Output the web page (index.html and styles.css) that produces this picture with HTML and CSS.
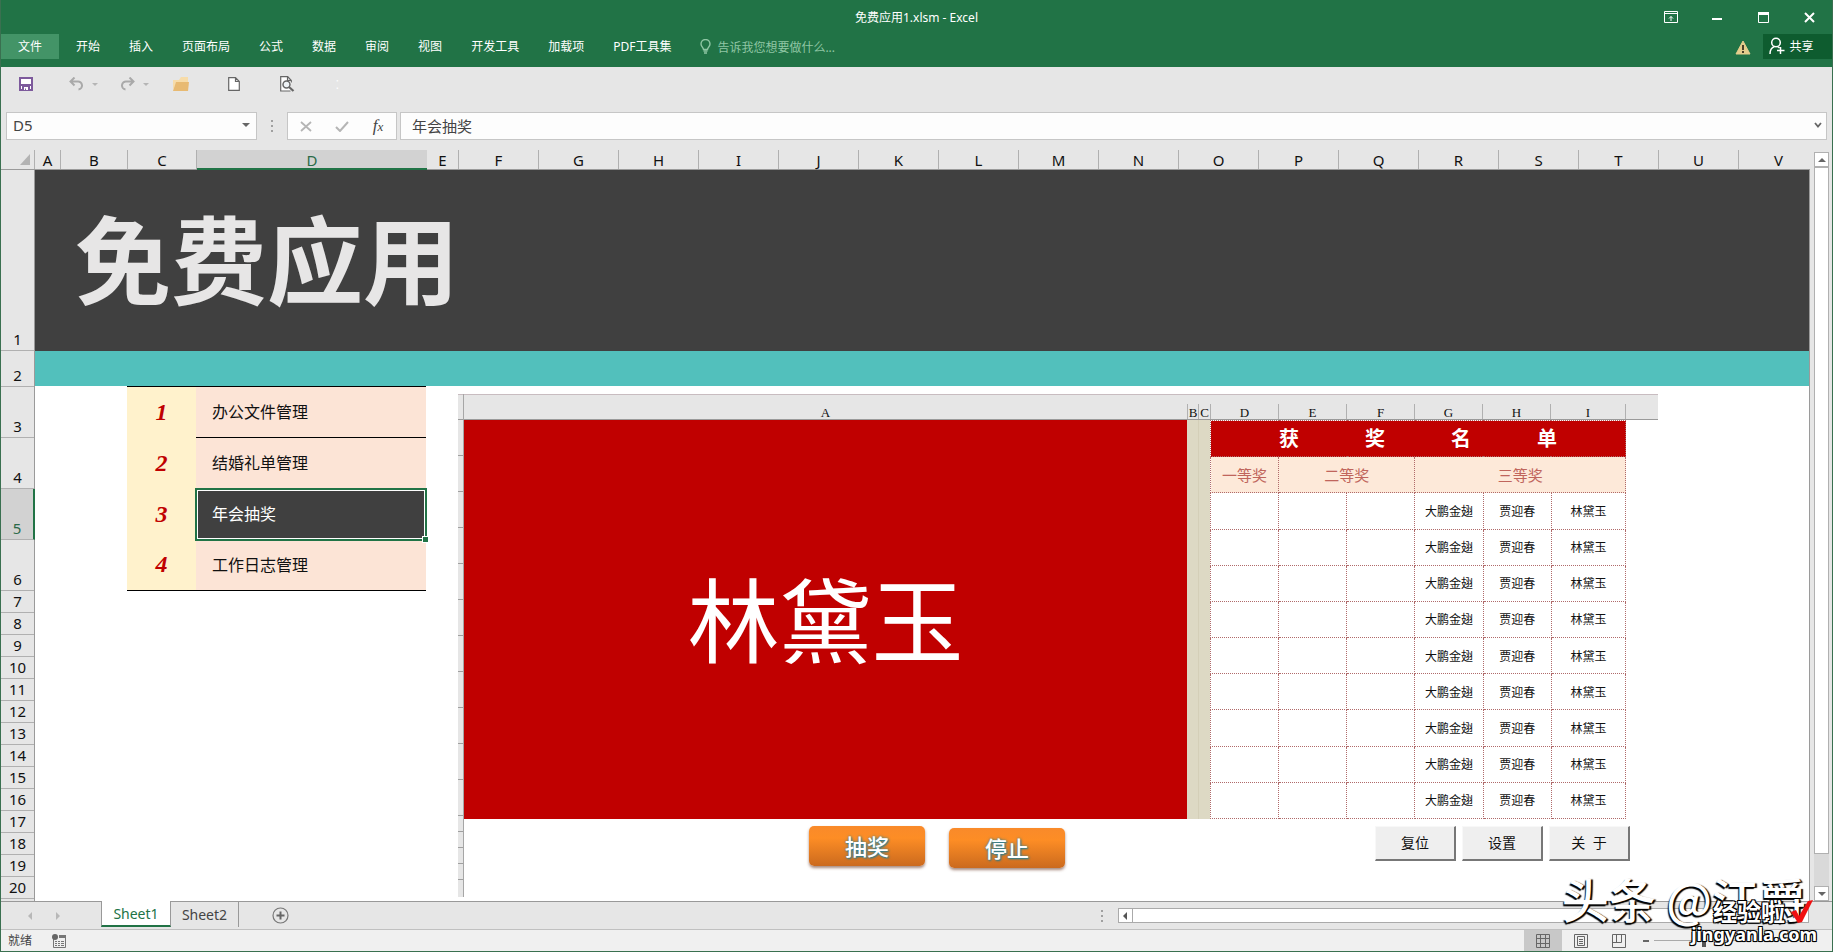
FILE: index.html
```html
<!DOCTYPE html>
<html lang="zh-CN">
<head>
<meta charset="utf-8">
<title>免费应用1.xlsm - Excel</title>
<link rel="stylesheet" href="styles.css">
</head>
<body>
<div class="app">
  <header class="ribbon">
    <div class="titlebar">
      <h1 class="doc-title">免费应用1.xlsm - Excel</h1>
      <div class="window-controls">
        <button aria-label="功能区显示选项"><svg width="14" height="12" viewBox="0 0 14 12"><path d="M.5 .5h13v11H.5zM.5 2.500h13M7 10V5.500M5 7.500l2-2 2 2" fill="none" stroke="#fff"/></svg></button>
        <button aria-label="最小化"><svg width="10" height="10" viewBox="0 0 10 10"><path d="M0 6h10v2H0z" fill="#fff"/></svg></button>
        <button aria-label="最大化"><svg width="11" height="11" viewBox="0 0 11 11"><path d="M.5 .5h10v10H.5z" fill="none" stroke="#fff"/><path d="M0 0h11v3H0z" fill="#fff"/></svg></button>
        <button aria-label="关闭"><svg width="11" height="11" viewBox="0 0 11 11"><path d="M1 1l9 9M10 1l-9 9" stroke="#fff" stroke-width="2"/></svg></button>
      </div>
    </div>
    <nav class="tabs">
      <button class="tab tab-file">文件</button>
      <button class="tab">开始</button>
      <button class="tab">插入</button>
      <button class="tab">页面布局</button>
      <button class="tab">公式</button>
      <button class="tab">数据</button>
      <button class="tab">审阅</button>
      <button class="tab">视图</button>
      <button class="tab">开发工具</button>
      <button class="tab">加载项</button>
      <button class="tab">PDF工具集</button>
      <button class="tell-me">
        <svg width="11" height="15" viewBox="0 0 11 15"><path d="M3.500 10.500c0-2-2.500-3-2.500-5.500a4.500 4.500 0 0 1 9 0c0 2.500-2.500 3.500-2.500 5.500z" fill="none" stroke="#8fc6a4" stroke-width="1.400"/><path d="M3.500 12h4M4 14h3" stroke="#8fc6a4" stroke-width="1.400"/></svg>
        告诉我您想要做什么...
      </button>
      <svg class="warning" width="16" height="15" viewBox="0 0 16 15"><path d="M8 1l7 13H1z" fill="#e5cd8c" stroke="#e5cd8c" stroke-linejoin="round"/><path d="M7 5h2v5H7zM7 11h2v2H7z" fill="#4a4028"/></svg>
      <button class="share">
        <svg width="16" height="18" viewBox="0 0 16 18"><circle cx="7" cy="5.500" r="4.300" fill="none" stroke="#fff" stroke-width="1.500"/><path d="M1 17c0-4 1.500-6.500 4.500-7.500M8.500 9.500l2 1.500M11.500 10v7M8 13.500h7.500" fill="none" stroke="#fff" stroke-width="1.500"/></svg>
        共享
      </button>
    </nav>
  </header>

  <div class="quick-access">
    <button class="qa qa-save" aria-label="保存"><svg width="14" height="14" viewBox="0 0 14 14"><path d="M1 1h12v12H1z" fill="#fff" stroke="#7d5a9c" stroke-width="2"/><path d="M1 7h12v2H1zM3 9h8v5H3z" fill="#7d5a9c"/><path d="M5 10h4v3H7v-1.500H6V13H5z" fill="#fff"/></svg></button>
    <button class="qa qa-undo" aria-label="撤消"><svg width="15" height="14" viewBox="0 0 15 14"><path d="M1.500 4.500h7a4 4 0 0 1 1 8M5.500 .5l-4 4 4 4" fill="none" stroke="#a9a9a9" stroke-width="2"/></svg><span class="caret"></span></button>
    <button class="qa qa-redo" aria-label="恢复"><svg width="15" height="14" viewBox="0 0 15 14"><path d="M13.500 4.500h-7a4 4 0 0 0-1 8M9.500 .5l4 4-4 4" fill="none" stroke="#a9a9a9" stroke-width="2"/></svg><span class="caret"></span></button>
    <button class="qa qa-open" aria-label="打开"><svg width="16" height="14" viewBox="0 0 16 14"><path d="M0 3h6l2-3h7v6H3L0 13z" fill="#f7dca9"/><path d="M3 5h13l-1 9H0z" fill="#e8ba72"/></svg></button>
    <button class="qa qa-new" aria-label="新建"><svg width="12" height="14" viewBox="0 0 12 14"><path d="M.7.700h6.800l3.800 3.800v8.800H.7zM7.500.700v3.800h3.800" fill="#fff" stroke="#666" stroke-width="1.200"/></svg></button>
    <button class="qa qa-preview" aria-label="打印预览"><svg width="15" height="16" viewBox="0 0 15 16"><path d="M10.500 15H.7V.700h7l3.600 3.800v2M7.500.700v3.800h3.800" fill="#fff" stroke="#666" stroke-width="1.200"/><circle cx="6.500" cy="8.500" r="3.500" fill="#eef3f6" stroke="#666" stroke-width="1.500"/><path d="M9 11l4.500 4" stroke="#666" stroke-width="2.200"/></svg></button>
    <span class="qa-more">⁚</span>
  </div>

  <div class="formula-bar">
    <div class="name-box">
      <input aria-label="名称框" value="D5">
      <span class="caret caret-dark"></span>
    </div>
    <span class="grip"><i></i><i></i><i></i></span>
    <div class="fx-buttons">
      <button aria-label="取消"><svg width="12" height="11" viewBox="0 0 12 11"><path d="M1 1l10 9M11 1L1 10" stroke="#b5b5b5" stroke-width="1.800"/></svg></button>
      <button aria-label="输入"><svg width="14" height="11" viewBox="0 0 14 11"><path d="M1 6l4 4 8-9" fill="none" stroke="#b5b5b5" stroke-width="2"/></svg></button>
      <button class="fx" aria-label="插入函数"><span>f<small>x</small></span></button>
    </div>
    <div class="formula">
      <input aria-label="编辑栏" value="年会抽奖">
      <svg width="8" height="6" viewBox="0 0 8 6"><path d="M1 1l3 3.500L7 1" fill="none" stroke="#666" stroke-width="1.800"/></svg>
    </div>
  </div>

  <main class="workbook">
    <div class="sheet">
      <div class="col-heads">
        <span class="corner"><svg width="10" height="11" viewBox="0 0 10 11"><path d="M10 0v11H0z" fill="#b3b3b3"/></svg></span>
        <span class="col col-a">A</span><span class="col col-b">B</span><span class="col col-c">C</span><span class="col col-d">D</span><span class="col col-e">E</span>
        <span class="col">F</span><span class="col">G</span><span class="col">H</span><span class="col">I</span><span class="col">J</span><span class="col">K</span><span class="col">L</span><span class="col">M</span><span class="col">N</span><span class="col">O</span><span class="col">P</span><span class="col">Q</span><span class="col">R</span><span class="col">S</span><span class="col">T</span><span class="col">U</span><span class="col">V</span>
      </div>
      <div class="sheet-body">
        <div class="row-heads">
          <span class="row row-1">1</span><span class="row row-2">2</span><span class="row row-tall">3</span><span class="row row-tall">4</span><span class="row row-tall row-active">5</span><span class="row row-tall">6</span>
          <span class="row">7</span><span class="row">8</span><span class="row">9</span><span class="row">10</span><span class="row">11</span><span class="row">12</span><span class="row">13</span><span class="row">14</span><span class="row">15</span><span class="row">16</span><span class="row">17</span><span class="row">18</span><span class="row">19</span><span class="row">20</span>
        </div>
        <div class="cells">
          <h2 class="banner">免费应用</h2>
          <div class="band"></div>
          <div class="content">
            <table class="menu">
              <tr><th>1</th><td>办公文件管理</td></tr>
              <tr><th>2</th><td>结婚礼单管理</td></tr>
              <tr class="selected"><th>3</th><td>年会抽奖<span class="fill-handle"></span></td></tr>
              <tr><th>4</th><td>工作日志管理</td></tr>
            </table>
            <section class="picture">
              <div class="pic-rows">
                <span class="pic-corner"></span>
                <i></i><i></i><i></i><i></i><i></i><i></i><i></i><i></i><i></i><i></i><i></i>
                <i class="low"></i><i class="low"></i><i class="low"></i><i class="low"></i><i class="low end"></i>
              </div>
              <div class="pic-main">
                <div class="pic-cols">
                  <span class="pc-a">A</span><span class="pc-b">B</span><span class="pc-c">C</span><span>D</span><span>E</span><span>F</span><span>G</span><span>H</span><span class="pc-i">I</span><span class="pc-rest"></span>
                </div>
                <div class="draw">
                  <div class="draw-name">林黛玉</div>
                  <div class="tan tan-b"></div><div class="tan tan-c"></div>
                  <table class="winners">
                    <colgroup><col><col><col><col><col><col class="wide"></colgroup>
                    <tr><th colspan="6" class="win-title"><div><span>获</span><span>奖</span><span>名</span><span>单</span></div></th></tr>
                    <tr class="ranks"><th>一等奖</th><th colspan="2">二等奖</th><th colspan="3">三等奖</th></tr>
                    <tr><td></td><td></td><td></td><td>大鹏金翅</td><td>贾迎春</td><td>林黛玉</td></tr>
                    <tr><td></td><td></td><td></td><td>大鹏金翅</td><td>贾迎春</td><td>林黛玉</td></tr>
                    <tr><td></td><td></td><td></td><td>大鹏金翅</td><td>贾迎春</td><td>林黛玉</td></tr>
                    <tr><td></td><td></td><td></td><td>大鹏金翅</td><td>贾迎春</td><td>林黛玉</td></tr>
                    <tr><td></td><td></td><td></td><td>大鹏金翅</td><td>贾迎春</td><td>林黛玉</td></tr>
                    <tr><td></td><td></td><td></td><td>大鹏金翅</td><td>贾迎春</td><td>林黛玉</td></tr>
                    <tr><td></td><td></td><td></td><td>大鹏金翅</td><td>贾迎春</td><td>林黛玉</td></tr>
                    <tr><td></td><td></td><td></td><td>大鹏金翅</td><td>贾迎春</td><td>林黛玉</td></tr>
                    <tr><td></td><td></td><td></td><td>大鹏金翅</td><td>贾迎春</td><td>林黛玉</td></tr>
                  </table>
                </div>
                <div class="actions">
                  <button class="orange">抽奖</button>
                  <button class="orange orange-stop">停止</button>
                  <div class="plain-buttons">
                    <button class="plain">复位</button><button class="plain">设置</button><button class="plain">关&nbsp; 于</button>
                  </div>
                </div>
              </div>
            </section>
          </div>
        </div>
      </div>
    </div>
    <div class="vscroll">
      <button aria-label="向上滚动"><span class="tri tri-up"></span></button>
      <div class="vthumb"></div>
      <button aria-label="向下滚动"><span class="tri tri-down"></span></button>
    </div>
  </main>

  <footer class="sheet-tabs">
    <button class="nav-arrow" aria-label="上一个"><span class="tri tri-left pale"></span></button>
    <button class="nav-arrow" aria-label="下一个"><span class="tri tri-right pale"></span></button>
    <button class="sheet-tab sheet-tab-active">Sheet1</button>
    <button class="sheet-tab">Sheet2</button>
    <button class="add-sheet" aria-label="新工作表"><svg width="17" height="17" viewBox="0 0 17 17"><circle cx="8.500" cy="8.500" r="7.500" fill="none" stroke="#777" stroke-width="1.200"/><path d="M8.500 4.500v8M4.500 8.500h8" stroke="#666" stroke-width="2"/></svg></button>
    <div class="hscroll">
      <span class="grip"><i></i><i></i><i></i></span>
      <button aria-label="向左滚动"><span class="tri tri-left"></span></button>
      <div class="hthumb"></div>
    </div>
  </footer>

  <div class="status">
    <span class="ready">就绪</span>
    <svg width="14" height="14" viewBox="0 0 14 14"><path d="M1.500 5v8.500h12v-12H7" fill="none" stroke="#777"/><path d="M7 1h7v3H7zM3 7h2v1H3zM6 7h2v1H6zM9 7h3v1H9zM3 9h2v1H3zM6 9h2v1H6zM9 9h3v1H9zM3 11h2v1H3zM6 11h2v1H6zM9 11h3v1H9z" fill="#777"/><circle cx="3" cy="3" r="3" fill="#666"/></svg>
    <div class="views">
      <button class="view view-active" aria-label="普通"><svg width="14" height="14" viewBox="0 0 14 14"><path d="M.5.500h13v13H.5zM.5 4.500h13M.5 9.500h13M4.500.500v13M9.500.500v13" fill="none" stroke="#666"/></svg></button>
      <button class="view" aria-label="页面布局"><svg width="14" height="14" viewBox="0 0 14 14"><path d="M.5.500h13v13H.5zM3.500 2.500h7v9h-7zM5 5.500h4M5 7.500h4M5 9.500h4" fill="none" stroke="#666"/></svg></button>
      <button class="view" aria-label="分页预览"><svg width="14" height="14" viewBox="0 0 14 14"><path d="M.5.500h13v13H.5zM4.500.500v8M9.500.500v8M.5 8.500h9" fill="none" stroke="#666"/></svg></button>
    </div>
    <span class="zoom-out"></span>
    <input class="zoom" type="range" aria-label="缩放" value="31">
  </div>

  <div class="mark mark-author">头条 @江爵</div>
  <div class="mark mark-site">
    <div class="mark-line">经验啦<svg width="22" height="24" viewBox="0 0 22 24"><path d="M0 12l5-2 3 6L17 1l5-1L11 22l-4 1z" fill="#f01010"/></svg></div>
    <div>jingyanla.com</div>
  </div>
</div>
</body>
</html>
```
FILE: styles.css
```css
* { box-sizing: border-box; }

body {
  margin: 0;
  font-family: "Noto Sans", "Noto Sans CJK SC", sans-serif;
  font-size: 12px;
  color: #222;
}

button {
  margin: 0;
  padding: 0;
  border: 0;
  background: none;
  font: inherit;
  color: inherit;
  display: flex;
  align-items: center;
  justify-content: center;
}

input {
  font: inherit;
  color: inherit;
  border: 0;
  outline: 0;
  background: none;
  min-width: 0;
  padding: 0;
}

svg { flex: none; }

.app {
  position: relative;
  height: 100vh;
  display: flex;
  flex-direction: column;
  background: #e6e6e6;
  border: 1px solid #3a7050;
  border-top: 0;
  overflow: hidden;
}

/* Ribbon */
.ribbon {
  flex: none;
  height: 67px;
  margin: 0 -1px;
  padding: 0 1px;
  background: #217346;
  color: #fff;
}
.titlebar {
  display: grid;
  grid-template-columns: 1fr auto 1fr;
  align-items: center;
  height: 34px;
}
.doc-title {
  grid-column: 2;
  margin: 0;
  font-size: 12px;
  font-weight: 400;
}
.window-controls {
  display: flex;
  justify-content: flex-end;
}
.window-controls button { width: 46px; height: 32px; }
.tabs {
  display: flex;
  height: 25px;
}
.tab { padding: 0 14px 2px; margin-right: 1px; }
.tab-file { padding: 0 17px 2px; margin-right: 3px; background: #439467; }
.tell-me { margin-left: 14px; gap: 6px; color: #8fc6a4; }
.warning { margin: 6px 12px 0 auto; }
.share {
  width: 69px;
  gap: 4px;
  padding: 0 12px 2px 0;
  background: #0e5c2f;
}

/* Quick access toolbar */
.quick-access {
  flex: none;
  display: flex;
  align-items: center;
  height: 34px;
  padding-left: 18px;
}
.qa { gap: 8px; justify-content: flex-start; }
.qa-save { width: 50px; }
.qa-undo, .qa-redo { width: 51px; }
.qa-open { width: 55px; margin-left: 2px; }
.qa-new { width: 52px; }
.qa-preview { width: 56px; }
.qa-more { color: #fff; }
.caret {
  border: 3px solid transparent;
  border-top: 3px solid #b5b5b5;
  border-bottom: 0;
}
.caret-dark { border-width: 4px 4px 0; border-top-color: #666; }

/* Formula bar */
.formula-bar {
  flex: none;
  display: flex;
  height: 39px;
  padding: 11px 5px 0;
  font-size: 15px;
  color: #444;
}
.name-box, .fx-buttons, .formula {
  display: flex;
  align-items: center;
  height: 28px;
  background: #fdfdfd;
  border: 1px solid #c6c6c6;
}
.name-box { width: 251px; padding: 0 6px 2px; }
.name-box input { flex: 1; }
.grip {
  display: flex;
  flex-direction: column;
  justify-content: center;
  gap: 3px;
}
.grip i { width: 2px; height: 2px; background: #a0a0a0; }
.formula-bar .grip { width: 30px; height: 28px; align-items: center; }
.fx-buttons { width: 110px; }
.fx-buttons button { flex: 1; }
.fx {
  font-family: "Liberation Serif", serif;
  font-style: italic;
  font-size: 17px;
}
.fx small { font-size: 13px; }
.formula { flex: 1; margin-left: 3px; padding: 0 4px 2px 11px; }
.formula input { flex: 1; }

/* Worksheet */
.workbook { flex: 1; min-height: 0; display: flex; padding-top: 10px; }
.sheet {
  flex: 1;
  min-width: 0;
  display: flex;
  flex-direction: column;
  overflow: hidden;
}
.col-heads {
  flex: none;
  display: flex;
  height: 20px;
  border-bottom: 1px solid #9a9a9a;
  font-size: 15px;
  line-height: 20px;
  color: #111;
}
.col, .corner {
  flex: none;
  width: 80px;
  text-align: center;
  border-right: 1px solid #b0b0b0;
}
.corner { width: 34px; padding-right: 4px; display: flex; justify-content: flex-end; align-items: center; }
.col-a { width: 26px; }
.col-b { width: 67px; }
.col-c { width: 69px; }
.col-d { width: 230px; height: 20px; background: #d2d2d2; color: #2a6a48; border-right: 0; border-bottom: 2px solid #217346; }
.col-e { width: 32px; }

.sheet-body { flex: 1; min-height: 0; display: flex; overflow: hidden; }
.row-heads {
  flex: none;
  width: 34px;
  border-right: 1px solid #9a9a9a;
  font-size: 15px;
  color: #111;
}
.row {
  display: flex;
  align-items: flex-end;
  justify-content: center;
  height: 22px;
  padding-bottom: 1px;
  line-height: 20px;
  border-bottom: 1px solid #b0b0b0;
}
.row-1 { height: 181px; }
.row-2 { height: 36px; }
.row-tall { height: 51px; }
.row-active { background: #d2d2d2; color: #2a6a48; margin-right: -1px; border-right: 2px solid #217346; }

.cells { flex: 1; min-width: 0; background: #fff; border-right: 1px solid #9a9a9a; }
.banner {
  margin: 0;
  height: 181px;
  padding-left: 40px;
  background: #404040;
  color: #e7e6e6;
  font-family: "Noto Sans CJK SC", sans-serif;
  font-size: 96px;
  font-weight: 700;
  line-height: 172px;
}
.band { height: 35px; background: #52c0bc; }
.content { display: flex; align-items: flex-start; padding-left: 92px; }

.menu {
  flex: none;
  width: 299px;
  border-collapse: collapse;
  border-top: 1px solid #000;
  border-bottom: 1px solid #000;
  font-size: 16px;
}
.menu tr { height: 51px; }
.menu th {
  width: 69px;
  padding: 0;
  background: #fff2cc;
  color: #c00000;
  font-family: "Liberation Serif", serif;
  font-size: 24px;
  font-style: italic;
}
.menu td { padding: 0 0 2px 16px; background: #fce4d6; color: #111; }
.menu tr:first-child td { border-bottom: 1px solid #000; }
.menu .selected td {
  position: relative;
  background: #404040;
  color: #fff;
  outline: 2px solid #217346;
  outline-offset: -1px;
  box-shadow: inset 0 0 0 2px #fff;
}
.fill-handle {
  position: absolute;
  right: -3px;
  bottom: -3px;
  width: 7px;
  height: 7px;
  background: #217346;
  border: 1px solid #fff;
}

/* Pasted lottery sheet */
.picture { flex: none; display: flex; margin: 8px 0 0 32px; }
.pic-rows { width: 6px; background: #e6e6e6; border-right: 1px solid #a6a6a6; }
.pic-corner { display: block; height: 26px; border-bottom: 1px solid #9a9a9a; border-top: 1px solid #c8bcc0; }
.pic-rows i { display: block; height: 36px; border-bottom: 1px solid #a0a0a0; }
.pic-rows i.low { height: 16px; }
.pic-rows i.end { height: 17px; border: 0; }
.pic-main { background: #fff; }
.pic-cols {
  display: flex;
  height: 26px;
  padding-top: 9px;
  background: #e6e6e6;
  border-top: 1px solid #c8bcc0;
  border-bottom: 1px solid #9a9a9a;
  font-family: "Liberation Serif", serif;
  font-size: 13px;
  line-height: 18px;
  text-align: center;
  color: #111;
}
.pic-cols span { width: 68px; border-right: 1px solid #b0b0b0; }
.pic-cols .pc-a { width: 724px; }
.pic-cols .pc-b { width: 11px; }
.pic-cols .pc-c { width: 12px; }
.pic-cols .pc-i { width: 75px; }
.pic-cols .pc-rest { width: 32px; border: 0; }
.draw { display: flex; width: 1162px; height: 399px; }
.draw-name {
  width: 723px;
  background: #c00000;
  color: #fff;
  font-family: "Noto Sans CJK SC", sans-serif;
  font-size: 92px;
  text-align: center;
  line-height: 392px;
}
.tan { background: #ddd9c4; border-right: 1px solid #d4cfb8; }
.tan-b { width: 12px; }
.tan-c { width: 11px; border: 0; }
.winners {
  flex: 1;
  height: 399px;
  table-layout: fixed;
  border-collapse: collapse;
}
.winners col { width: 68px; }
.winners col.wide { width: 74px; }
.winners th, .winners td {
  padding: 0;
  height: 36px;
  border: 1px dotted #b06a6a;
  text-align: center;
  font-weight: 400;
  color: #111;
}
.winners .win-title { background: #c00000; color: #fff; font-size: 20px; font-weight: 700; line-height: 24px; }
.win-title div { display: flex; justify-content: center; gap: 66px; }
.winners .ranks th { background: #fde9d9; color: #c0655c; font-size: 15px; }

.actions { display: flex; align-items: flex-start; padding: 7px 28px 0 345px; }
.orange {
  width: 116px;
  height: 40px;
  padding-bottom: 2px;
  border-radius: 5px;
  background: linear-gradient(#f98a2a, #fd8d25 30%, #cb6a1e);
  box-shadow: 0 2px 3px rgba(110, 60, 40, .6);
  color: #fff;
  font-size: 22px;
  font-weight: 500;
  text-shadow: 1px 1px 2px #1c7c96, 0 0 3px #3a8590;
}
.orange-stop { margin: 2px 0 0 24px; }
.plain-buttons { display: flex; gap: 6px; margin-left: auto; }
.plain {
  width: 81px;
  height: 35px;
  padding-bottom: 3px;
  background: #efefef;
  border: 1px solid #f8f8f8;
  border-right: 2px solid #777;
  border-bottom: 2px solid #777;
  font-size: 14px;
  color: #111;
}

/* Scroll bars */
.vscroll {
  flex: none;
  width: 15px;
  margin: 2px 3px 0 4px;
  display: flex;
  flex-direction: column;
  background: #d9d9d9;
}
.vscroll button { height: 15px; background: #fff; border: 1px solid #b0b0b0; }
.vthumb { flex: 1; margin-bottom: 32px; background: #fff; border: 1px solid #b0b0b0; }
.tri { border: 4px solid transparent; }
.tri-up { border-top: 0; border-bottom-color: #666; }
.tri-down { border-bottom: 0; border-top-color: #666; }
.tri-left { border-left: 0; border-right-color: #555; }
.tri-right { border-right: 0; border-left-color: #555; }
.tri-left.pale { border-right-color: #b8b8b8; }
.tri-right.pale { border-left-color: #b8b8b8; }

/* Sheet tabs */
.sheet-tabs {
  flex: none;
  display: flex;
  height: 28px;
  padding-left: 15px;
  border-top: 1px solid #999;
  font-size: 14px;
  color: #444;
}
.nav-arrow { width: 28px; height: 28px; }
.sheet-tab { height: 25px; width: 68px; border-right: 1px solid #999; }
.sheet-tab-active {
  width: 70px;
  height: 26px;
  margin: -1px 0 0 29px;
  background: #fff;
  color: #217346;
  border-left: 1px solid #999;
  border-bottom: 2px solid #217346;
}
.add-sheet { margin-left: 33px; width: 17px; height: 27px; }
.hscroll {
  display: flex;
  align-items: center;
  margin: 0 23px 0 auto;
  width: 39%;
}
.hscroll .grip { width: 17px; }
.hscroll button { width: 15px; height: 15px; background: #fff; border: 1px solid #aaa; }
.hthumb { flex: 1; height: 15px; background: #fff; border: 1px solid #aaa; border-left: 0; }

/* Status bar */
.status {
  flex: none;
  display: flex;
  align-items: center;
  height: 22px;
  padding-left: 7px;
  background: #f0f0f0;
  border-top: 1px solid #c0c0c0;
  color: #444;
}
.ready { width: 44px; padding-bottom: 2px; }
.views { display: flex; height: 100%; margin-left: auto; }
.view { width: 38px; }
.view-active { background: #c8c8c8; }
.zoom-out { width: 6px; height: 2px; margin: 0 5px; background: #666; }
.zoom {
  width: 160px;
  height: 12px;
  margin: 0 18px 0 0;
  appearance: none;
  background: linear-gradient(#aaa, #aaa) center / 100% 1px no-repeat;
}
.zoom::-webkit-slider-thumb { appearance: none; width: 4px; height: 12px; background: #555; }

/* Overlaid watermarks */
.mark { position: absolute; color: #fff; white-space: nowrap; }
.mark-author {
  right: 26px;
  bottom: 23px;
  font-family: "Noto Sans CJK SC", sans-serif;
  font-size: 47px;
  font-weight: 500;
  line-height: 60px;
  text-shadow: 2px 1px 1px #000, -1px 2px 1px #000;
}
.mark-site {
  right: 15px;
  bottom: 7px;
  font-size: 18px;
  font-weight: 700;
  line-height: 20px;
  text-align: right;
  text-shadow: 1px 1px 0 #000, -1px -1px 0 #000, 1px -1px 0 #000, -1px 1px 0 #000, 0 1px 1px #000;
}
.mark-line { display: flex; align-items: center; justify-content: flex-end; gap: 6px; font-size: 24px; line-height: 24px; padding-right: 4px; }
```
